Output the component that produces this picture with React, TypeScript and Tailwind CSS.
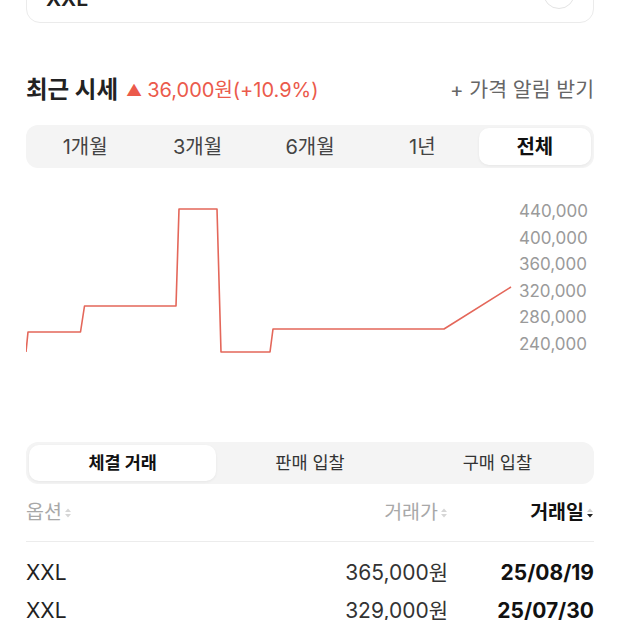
import React from "react";

const periods = ["1개월", "3개월", "6개월", "1년", "전체"];
const tradeTabs = ["체결 거래", "판매 입찰", "구매 입찰"];
const axis = ["440,000", "400,000", "360,000", "320,000", "280,000", "240,000"];
const rows = [
  { option: "XXL", price: "365,000원", date: "25/08/19" },
  { option: "XXL", price: "329,000원", date: "25/07/30" },
];

// chart points in page coords, shifted into the svg box below
const pts: [number, number][] = [
  [26, 352], [28, 332], [80.5, 332], [84.5, 306], [176, 306], [179, 209],
  [217, 209], [221, 352], [270, 352], [273, 329], [444, 329], [511, 287],
];

function SortIcon({ active }: { active?: boolean }) {
  return (
    <svg width="8" height="12" viewBox="0 0 8 12" className="ml-[2px]">
      <path d="M4 1.5 L7 5 L1 5 Z" fill={active ? "#cfcfcf" : "#d6d6d6"} />
      <path d="M4 10.5 L7 7 L1 7 Z" fill={active ? "#222" : "#d6d6d6"} />
    </svg>
  );
}

export default function App() {
  const d = pts
    .map(([x, y], i) => `${i === 0 ? "M" : "L"}${x - 26} ${y - 198}`)
    .join(" ");

  return (
    <div
      className="w-[620px] h-[620px] overflow-hidden bg-white px-[26px] text-[#222]"
      style={{ fontFamily: 'Inter, "Noto Sans CJK KR", sans-serif' }}
    >
      {/* product card, mostly scrolled out of view */}
      <div className="mt-[-38px] h-[61px] rounded-[14px] border border-[#ebebeb] flex items-center justify-between pl-[19px] pr-[18px]">
        <span className="text-[21px] font-semibold mt-[12px]">XXL</span>
        <div className="w-[32px] h-[32px] rounded-full border border-[#e4e4e4]" />
      </div>

      <div className="mt-[52px] h-[30px] flex items-center justify-between">
        <div className="flex items-center">
          <span className="text-[23.5px] font-bold text-[#222]">최근 시세</span>
          <span className="ml-[8px] text-[16px] text-[#eb5a4b]">▲</span>
          <span className="ml-[5px] text-[20px] text-[#eb5a4b]">36,000원(+10.9%)</span>
        </div>
        <span className="text-[20.5px] text-[#666]">+ 가격 알림 받기</span>
      </div>

      <div className="mt-[20px] h-[43px] rounded-[12px] bg-[#f4f4f4] p-[3px] grid grid-cols-5">
        {periods.map((p) => (
          <div
            key={p}
            className={
              p === "전체"
                ? "flex items-center justify-center rounded-[10px] bg-white text-[20px] font-bold text-[#111] shadow-[0_1px_3px_rgba(0,0,0,0.06)]"
                : "flex items-center justify-center text-[20px] text-[#444]"
            }
          >
            {p}
          </div>
        ))}
      </div>

      <div className="mt-[30px] h-[170px] flex">
        <svg width="486" height="170" className="shrink-0">
          <path d={d} fill="none" stroke="#e4675a" strokeWidth="1.6" strokeLinejoin="round" />
        </svg>
        <div className="ml-[7px] flex flex-col">
          {axis.map((a) => (
            <span key={a} className="text-[17px] leading-[26.6px] text-[#9a9a9a]">
              {a}
            </span>
          ))}
        </div>
      </div>

      <div className="mt-[74px] h-[42px] rounded-[12px] bg-[#f4f4f4] p-[3px] grid grid-cols-3">
        {tradeTabs.map((t, i) => (
          <div
            key={t}
            className={
              i === 0
                ? "flex items-center justify-center rounded-[10px] bg-white text-[17.5px] font-bold text-[#111] shadow-[0_1px_3px_rgba(0,0,0,0.06)]"
                : "flex items-center justify-center text-[17.5px] text-[#333]"
            }
          >
            {t}
          </div>
        ))}
      </div>

      <div className="mt-[13px] h-[32px] grid grid-cols-[1fr_auto_146px] items-center text-[19.5px]">
        <div className="flex items-center text-[#a8a8a8]">
          옵션
          <SortIcon />
        </div>
        <div className="flex items-center justify-end text-[#a8a8a8]">
          거래가
          <SortIcon />
        </div>
        <div className="flex items-center justify-end font-bold text-[#111]">
          거래일
          <SortIcon active />
        </div>
      </div>
      <div className="mt-[12px] h-px bg-[#ececec]" />

      <div className="mt-[12px]">
        {rows.map((r, i) => (
          <div key={i} className="h-[38px] grid grid-cols-[1fr_auto_146px] items-center text-[21px]">
            <span className="text-[#222]">{r.option}</span>
            <span className="text-right text-[#333]">{r.price}</span>
            <span className="text-right font-bold text-[#111]">{r.date}</span>
          </div>
        ))}
      </div>
    </div>
  );
}
